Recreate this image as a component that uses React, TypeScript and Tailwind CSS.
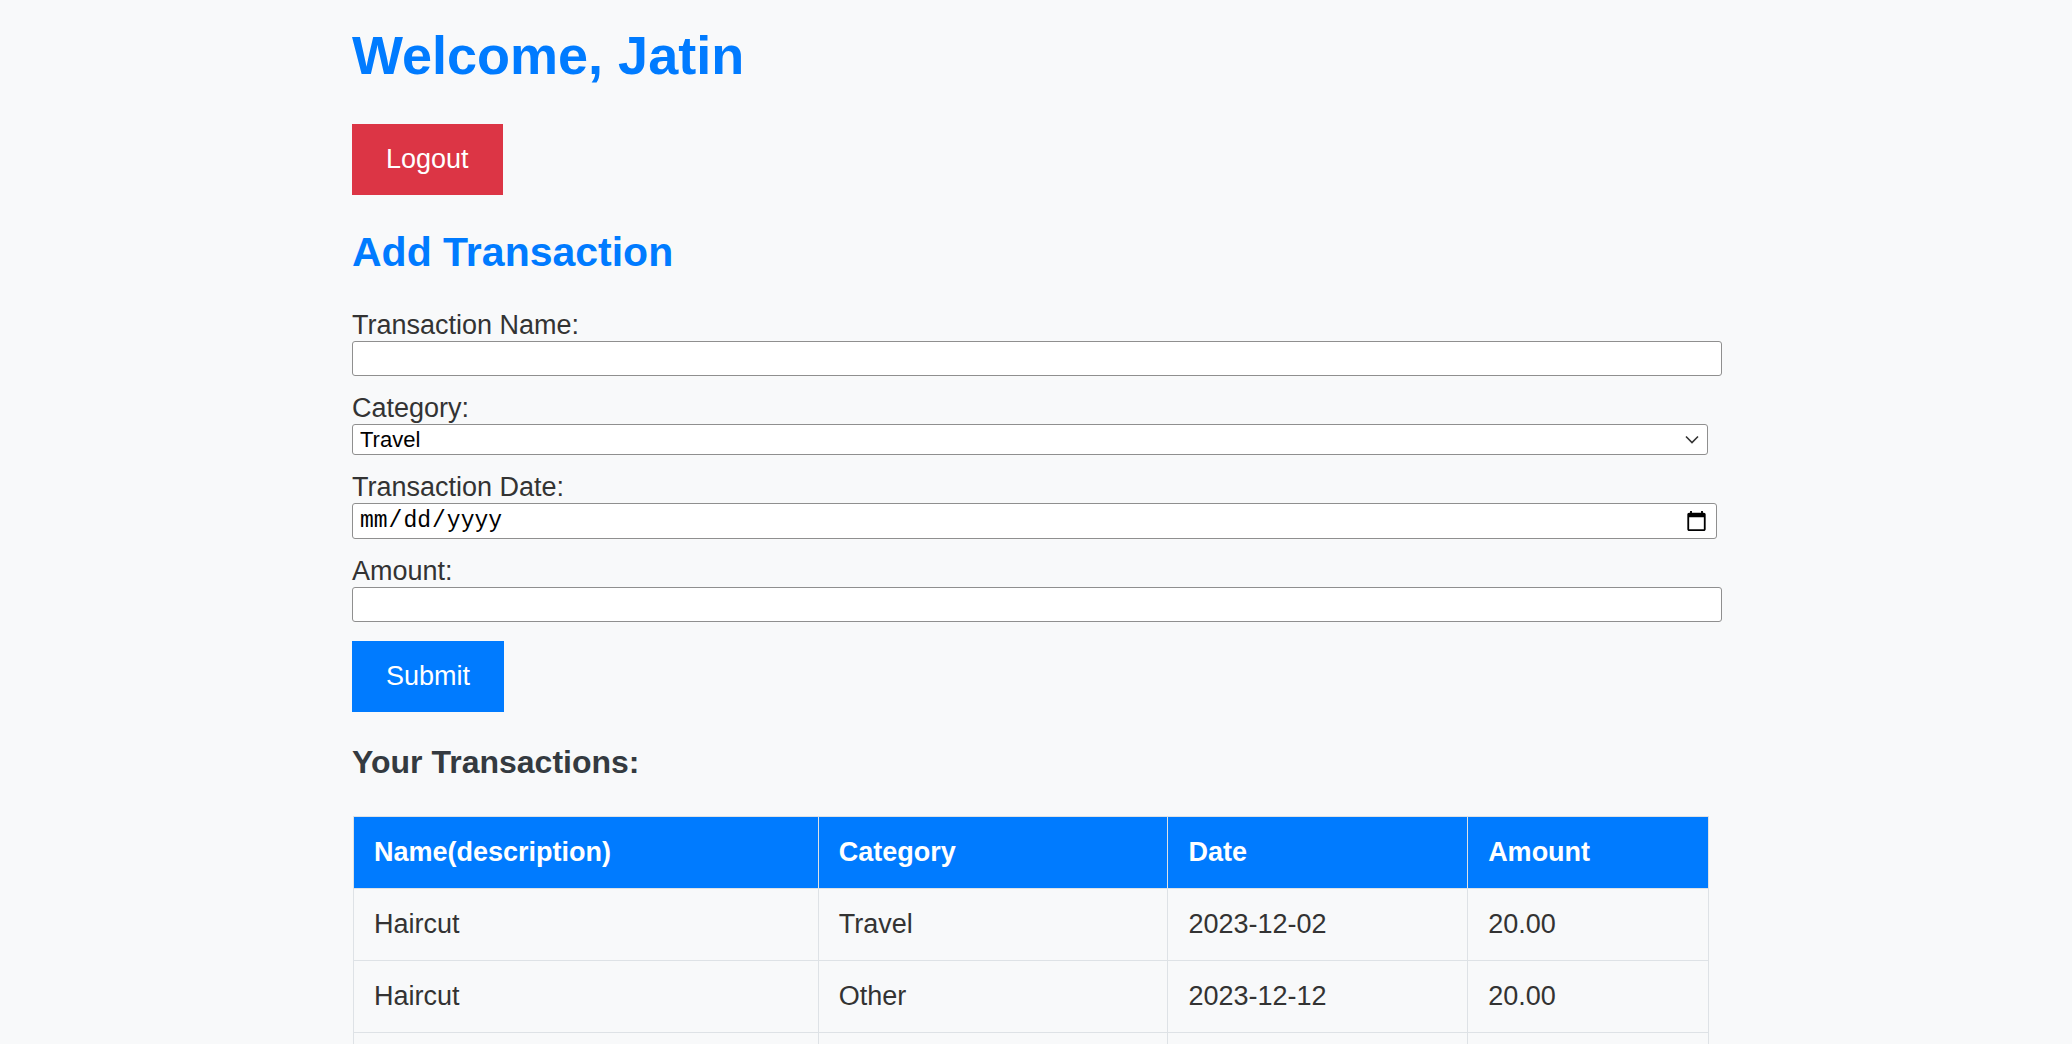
import { useState } from 'react';

type Transaction = {
  name: string;
  category: string;
  date: string;
  amount: string;
};

const transactions: Transaction[] = [
  { name: 'Haircut', category: 'Travel', date: '2023-12-02', amount: '20.00' },
  { name: 'Haircut', category: 'Other', date: '2023-12-12', amount: '20.00' },
  { name: 'Groceries', category: 'Food', date: '2023-12-15', amount: '45.50' },
];

const categories = ['Travel', 'Food', 'Shopping', 'Bills', 'Other'];

export default function App() {
  const [name, setName] = useState('');
  const [category, setCategory] = useState('Travel');
  const [date, setDate] = useState('');
  const [amount, setAmount] = useState('');

  const btn = 'px-[34px] py-[20px] text-[27px] leading-[31px] text-white';
  const label = 'block text-[27px] leading-[31px] text-[#333]';
  const field =
    'block h-[35px] rounded-[3px] border border-[#8f8f8f] bg-white px-[6px] text-[23px] text-black outline-none';

  return (
    <div className="min-h-screen bg-[#f8f9fa] font-['Liberation_Sans',Arial,sans-serif]">
      <div className="mx-auto w-[1368px] pt-[24px] pb-10">
        <h1 className="text-[54px] font-bold leading-[62px] text-[#007bff]">Welcome, Jatin</h1>

        <button className={`mt-[38px] bg-[#dc3545] ${btn}`}>Logout</button>

        <h2 className="mt-[34px] text-[41px] font-bold leading-[47px] text-[#007bff]">Add Transaction</h2>

        {/* form */}
        <form className="mt-[34px]" onSubmit={(e) => e.preventDefault()}>
          <label className={label}>Transaction Name:</label>
          <input
            type="text"
            value={name}
            onChange={(e) => setName(e.target.value)}
            className={`${field} mb-[17px] w-[1370px]`}
          />

          <label className={label}>Category:</label>
          <div className="relative mb-[17px] w-[1356px]">
            <select
              value={category}
              onChange={(e) => setCategory(e.target.value)}
              className="block h-[31px] w-full appearance-none rounded-[3px] border border-[#8f8f8f] bg-white pl-[7px] text-[22px] leading-[29px] text-black outline-none"
            >
              {categories.map((c) => (
                <option key={c}>{c}</option>
              ))}
            </select>
            <svg
              className="pointer-events-none absolute right-[8px] top-[9px] h-[13px] w-[16px]"
              viewBox="0 0 16 13"
              fill="none"
              stroke="#333"
              strokeWidth="1.6"
            >
              <path d="M2 3.5l6 6 6-6" />
            </svg>
          </div>

          <label className={label}>Transaction Date:</label>
          <input
            type="date"
            value={date}
            onChange={(e) => setDate(e.target.value)}
            className={`${field} mb-[17px] h-[36px] w-[1365px] font-['Liberation_Mono',monospace] text-[23px]`}
          />

          <label className={label}>Amount:</label>
          <input
            type="number"
            value={amount}
            onChange={(e) => setAmount(e.target.value)}
            className={`${field} w-[1370px]`}
          />

          <button type="submit" className={`mt-[19px] bg-[#007bff] ${btn}`}>
            Submit
          </button>
        </form>

        <h3 className="mt-[32px] text-[32px] font-bold leading-[37px] text-[#343a40]">Your Transactions:</h3>

        <table className="ml-[1px] mt-[35px] w-[1356px] border-collapse text-[27px] leading-[31px] text-[#333]">
          <thead>
            <tr className="bg-[#007bff] text-left text-white">
              <th className="w-[465px] border border-[#dee2e6] px-[20px] py-[20px] font-bold">Name(description)</th>
              <th className="w-[350px] border border-[#dee2e6] px-[20px] py-[20px] font-bold">Category</th>
              <th className="w-[300px] border border-[#dee2e6] px-[20px] py-[20px] font-bold">Date</th>
              <th className="w-[241px] border border-[#dee2e6] px-[20px] py-[20px] font-bold">Amount</th>
            </tr>
          </thead>
          <tbody>
            {transactions.map((t, i) => (
              <tr key={i}>
                <td className="border border-[#dee2e6] px-[20px] py-[20px]">{t.name}</td>
                <td className="border border-[#dee2e6] px-[20px] py-[20px]">{t.category}</td>
                <td className="border border-[#dee2e6] px-[20px] py-[20px]">{t.date}</td>
                <td className="border border-[#dee2e6] px-[20px] py-[20px]">{t.amount}</td>
              </tr>
            ))}
          </tbody>
        </table>
      </div>
    </div>
  );
}
